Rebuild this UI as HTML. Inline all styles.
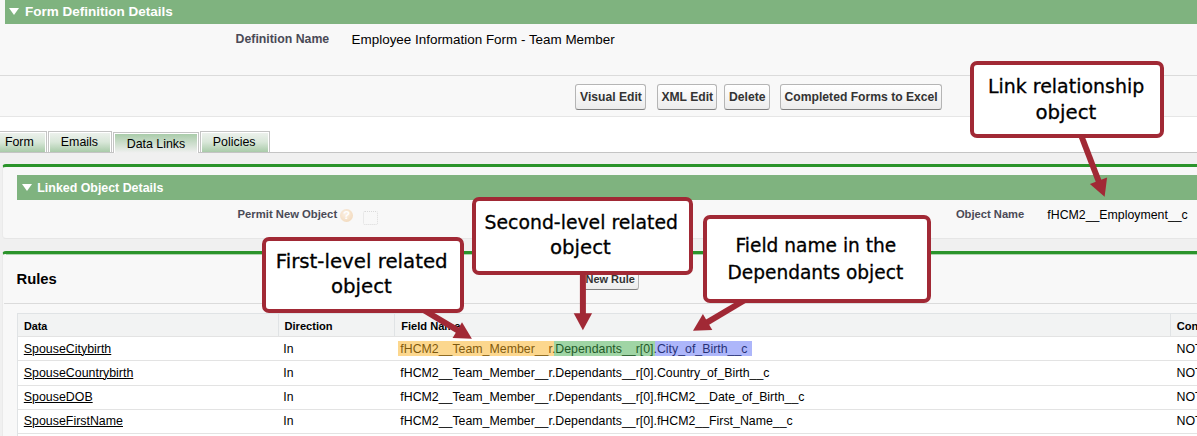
<!DOCTYPE html>
<html lang="en"><head><meta charset="utf-8"><title>Form Definition Details</title>
<style>
html,body{margin:0;padding:0;}
body{width:1197px;height:436px;overflow:hidden;position:relative;background:#fff;font-family:"Liberation Sans",Arial,Helvetica,sans-serif;font-size:12px;color:#000;}
.abs{position:absolute;}
.t{position:absolute;white-space:nowrap;line-height:1;display:block;}
h2,h3{margin:0;padding:0;font-weight:bold;}
button{margin:0;padding:0;font:inherit;color:inherit;text-align:left;overflow:visible;}
.panel{position:absolute;box-sizing:border-box;background:#f8f8f8;}
.subhdr{position:absolute;background:#7fb37f;color:#fff;}
.lbl{color:#4a4a56;font-weight:bold;}
.btn{position:absolute;box-sizing:border-box;border:1px solid #b5b5b5;border-bottom-color:#7f7f7f;border-radius:3px;background:linear-gradient(#ffffff,#ececec);color:#333;font-weight:bold;}
.tab{position:absolute;box-sizing:border-box;border:1px solid #c4c4c4;border-bottom:none;box-shadow:inset 1px 1px 0 #fff, inset -1px 0 0 #fff;background:linear-gradient(#eef2ee 0%,#d9e7d9 50%,#a9cba9 100%);}
.tab.active{background:linear-gradient(#a6caa6,#f0f0f0);}
.thead{position:absolute;box-sizing:border-box;background:#f2f3f3;border-top:1px solid #e0e3e5;border-left:1px solid #e0e3e5;font-weight:bold;}
.tbody{position:absolute;box-sizing:border-box;background:#fff;border-left:1px solid #e0e3e5;}
.row{position:absolute;box-sizing:border-box;border-top:1px solid #e3e3e3;}
.lnk{text-decoration:underline;}
.hl{position:absolute;}
.call{position:absolute;box-sizing:border-box;border:4px solid #a12935;border-radius:7px;background:#fff;font-family:"DejaVu Sans","Liberation Sans",sans-serif;color:#000;-webkit-text-stroke:0.3px #000;}
</style></head><body>
<div class="panel" style="left:0px;top:0px;width:1197px;height:117px;">
<div class="subhdr" style="left:5px;top:0px;width:1192px;height:24px;">
<svg class="abs" style="left:4px;top:8px" width="10" height="7" viewBox="0 0 10 7"><polygon points="0,0 10,0 5,7" fill="#fff"/></svg>
<h3 class="t" style="left:20px;top:4.77px;font-size:13.5px;font-weight:bold;">Form Definition Details</h3>
</div>
<label class="t lbl" style="left:235.6px;top:33.19px;font-size:12.3px;">Definition Name</label>
<span class="t" style="left:351.6px;top:32.53px;font-size:13.43px;">Employee Information Form - Team Member</span>
<div class="abs" style="left:0px;top:75px;width:1197px;height:1px;background:#dbdbdb;"></div>
<button class="btn" type="button" style="left:575px;top:84px;width:71px;height:26px;">
<span class="t" style="left:4px;top:5.92px;font-size:12.15px;">Visual Edit</span>
</button>
<button class="btn" type="button" style="left:657px;top:84px;width:60px;height:26px;">
<span class="t" style="left:3.4px;top:5.92px;font-size:12.15px;">XML Edit</span>
</button>
<button class="btn" type="button" style="left:724px;top:84px;width:46px;height:26px;">
<span class="t" style="left:4px;top:5.92px;font-size:12.15px;">Delete</span>
</button>
<button class="btn" type="button" style="left:780px;top:84px;width:162px;height:26px;">
<span class="t" style="left:3.6px;top:5.92px;font-size:12.15px;">Completed Forms to Excel</span>
</button>
<div class="abs" style="left:0px;top:116px;width:1197px;height:1px;background:#e6e6e6;"></div>
</div>
<div class="abs" style="left:0px;top:153px;width:1197px;height:283px;background:#f0f0f0;"></div>
<div class="abs" style="left:0px;top:152px;width:1197px;height:1px;background:#c4c4c4;"></div>
<div class="tab" style="left:-3px;top:131px;width:50px;height:21px;">
<span class="t" style="left:6.9px;top:4.1px;font-size:12.4px;">Form</span>
</div>
<div class="tab" style="left:48px;top:131px;width:64px;height:21px;">
<span class="t" style="left:11.8px;top:4.1px;font-size:12.4px;">Emails</span>
</div>
<div class="tab" style="left:200px;top:131px;width:70px;height:21px;">
<span class="t" style="left:11.8px;top:4.1px;font-size:12.4px;">Policies</span>
</div>
<div class="tab active" style="left:113px;top:132px;width:86px;height:21px;">
<span class="t" style="left:12.7px;top:5.1px;font-size:12.4px;">Data Links</span>
</div>
<div class="panel" style="left:2px;top:164px;width:1200px;height:75px;border-top:3px solid #2b942b;border-left:1px solid #eaeaea;border-bottom:1px solid #e6e6e6;border-radius:4px;">
<div class="subhdr" style="left:14px;top:8px;width:1180px;height:25px;">
<svg class="abs" style="left:5px;top:9px" width="10" height="7" viewBox="0 0 10 7"><polygon points="0,0 10,0 5,7" fill="#fff"/></svg>
<h3 class="t" style="left:20.3px;top:6.6px;font-size:12.4px;font-weight:bold;">Linked Object Details</h3>
</div>
<label class="t lbl" style="left:234.6px;top:42.05px;font-size:11.28px;">Permit New Object</label>
<div class="abs" style="left:336.8px;top:42px;width:13px;height:13px;border-radius:7px;background:radial-gradient(circle at 42% 38%,#fbf0e3,#f0d4b3);">
<span class="t" style="left:3.2px;top:0.87px;font-size:11.5px;font-weight:bold;color:#fff;">?</span>
</div>
<div class="abs" style="left:360px;top:44px;width:14.5px;height:14px;box-sizing:border-box;border:1px dotted #dadada;border-radius:2px;"></div>
<label class="t lbl" style="left:952.9px;top:41.92px;font-size:11.2px;">Object Name</label>
<span class="t" style="left:1044.3px;top:41.95px;font-size:12.34px;">fHCM2__Employment__c</span>
</div>
<div class="panel" style="left:2px;top:251px;width:1200px;height:200px;border-top:3px solid #2b942b;border-left:1px solid #eaeaea;border-radius:4px;">
<div class="abs" style="left:3px;top:0px;width:1191px;height:1px;background:rgba(43,148,43,0.35);"></div>
<h2 class="t" style="left:13.5px;top:17.97px;font-size:14.8px;font-weight:bold;">Rules</h2>
<button class="btn" type="button" style="left:578px;top:14px;width:58px;height:22px;">
<span class="t" style="left:3.5px;top:4.52px;font-size:10.96px;">New Rule</span>
</button>
<div class="abs" style="left:1px;top:49px;width:1193px;height:1px;background:#dbdbdb;"></div>
<div class="thead" style="left:14px;top:59px;width:1180px;height:24px;">
<div class="abs" style="left:260px;top:0px;width:1px;height:22px;background:#e0e3e5;"></div>
<div class="abs" style="left:376px;top:0px;width:1px;height:22px;background:#e0e3e5;"></div>
<div class="abs" style="left:1152px;top:0px;width:1px;height:22px;background:#e0e3e5;"></div>
<span class="t" style="left:5.9px;top:7.16px;font-size:10.8px;">Data</span>
<span class="t" style="left:266.5px;top:6.9px;font-size:11.1px;">Direction</span>
<span class="t" style="left:383.2px;top:6.9px;font-size:11.1px;">Field Name</span>
<span class="t" style="left:1158.7px;top:6.9px;font-size:11.1px;">Condition</span>
</div>
<div class="tbody" style="left:14px;top:82px;width:1180px;height:100px;">
<div class="row" style="left:0px;top:0px;width:1179px;height:24px;">
<a class="t lnk" style="left:5.8px;top:5.5px;font-size:12.4px;">SpouseCitybirth</a>
<span class="t" style="left:265.3px;top:5.67px;font-size:12.2px;">In</span>
<span class="t" style="left:382.3px;top:5.55px;font-size:12.35px;">fHCM2__Team_Member__r.Dependants__r[0].City_of_Birth__c</span>
<span class="t" style="left:1158.5px;top:5.5px;font-size:12.4px;">NOT</span>
<div class="hl" style="left:380px;top:4px;width:156px;height:15px;background:rgba(250,175,30,0.5);"></div>
<div class="hl" style="left:536px;top:4px;width:101px;height:15px;background:rgba(65,171,75,0.5);"></div>
<div class="hl" style="left:637px;top:4px;width:97px;height:15px;background:rgba(80,100,245,0.47);"></div>
</div>
<div class="row" style="left:0px;top:24px;width:1179px;height:25px;">
<a class="t lnk" style="left:5.8px;top:5.7px;font-size:12.4px;">SpouseCountrybirth</a>
<span class="t" style="left:265.3px;top:5.87px;font-size:12.2px;">In</span>
<span class="t" style="left:382.3px;top:5.75px;font-size:12.35px;">fHCM2__Team_Member__r.Dependants__r[0].Country_of_Birth__c</span>
<span class="t" style="left:1158.5px;top:5.7px;font-size:12.4px;">NOT</span>
</div>
<div class="row" style="left:0px;top:49px;width:1179px;height:24px;">
<a class="t lnk" style="left:5.8px;top:4.8px;font-size:12.4px;">SpouseDOB</a>
<span class="t" style="left:265.3px;top:4.97px;font-size:12.2px;">In</span>
<span class="t" style="left:382.3px;top:4.85px;font-size:12.35px;">fHCM2__Team_Member__r.Dependants__r[0].fHCM2__Date_of_Birth__c</span>
<span class="t" style="left:1158.5px;top:4.8px;font-size:12.4px;">NOT</span>
</div>
<div class="row" style="left:0px;top:73px;width:1179px;height:24px;">
<a class="t lnk" style="left:5.8px;top:5.1px;font-size:12.4px;">SpouseFirstName</a>
<span class="t" style="left:265.3px;top:5.27px;font-size:12.2px;">In</span>
<span class="t" style="left:382.3px;top:5.15px;font-size:12.35px;">fHCM2__Team_Member__r.Dependants__r[0].fHCM2__First_Name__c</span>
<span class="t" style="left:1158.5px;top:5.1px;font-size:12.4px;">NOT</span>
</div>
<div class="row" style="left:0px;top:97px;width:1179px;height:2px;">
</div>
</div>
</div>
<svg class="abs" style="left:0;top:0" width="1197" height="436" viewBox="0 0 1197 436">
<line x1="1081.0" y1="135.0" x2="1098.9" y2="181.8" stroke="#a12935" stroke-width="6"/><polygon points="1089.9,184.1 1104.6,196.7 1107.1,177.5" fill="#a12935"/>
<line x1="423.6" y1="310.0" x2="458.2" y2="330.6" stroke="#a12935" stroke-width="6"/><polygon points="452.6,338.0 471.9,338.8 462.0,322.2" fill="#a12935"/>
<line x1="582.9" y1="272.0" x2="582.9" y2="314.2" stroke="#a12935" stroke-width="6"/><polygon points="573.7,313.2 582.9,330.2 592.1,313.2" fill="#a12935"/>
<line x1="744.9" y1="300.0" x2="706.8" y2="322.6" stroke="#a12935" stroke-width="6"/><polygon points="702.9,314.1 693,330.7 712.3,330.0" fill="#a12935"/>
</svg>
<div class="call" style="left:970px;top:61px;width:194px;height:77px;">
<span class="t" style="left:13.99px;top:12.14px;font-size:18.97px;">Link relationship</span>
<span class="t" style="left:61.41px;top:37.59px;font-size:19.74px;">object</span>
</div>
<div class="call" style="left:261.5px;top:237px;width:202.5px;height:76px;">
<span class="t" style="left:10.22px;top:10.56px;font-size:19.78px;">First-level related</span>
<span class="t" style="left:65.51px;top:36.09px;font-size:19.74px;">object</span>
</div>
<div class="call" style="left:472px;top:197px;width:221px;height:77.5px;">
<span class="t" style="left:8.57px;top:12.75px;font-size:18.84px;">Second-level related</span>
<span class="t" style="left:74.01px;top:36.99px;font-size:19.74px;">object</span>
</div>
<div class="call" style="left:703px;top:215px;width:228px;height:88px;">
<span class="t" style="left:28.53px;top:18.26px;font-size:18.59px;">Field name in the</span>
<span class="t" style="left:20.53px;top:44.78px;font-size:18.57px;">Dependants object</span>
</div>
</body></html>
